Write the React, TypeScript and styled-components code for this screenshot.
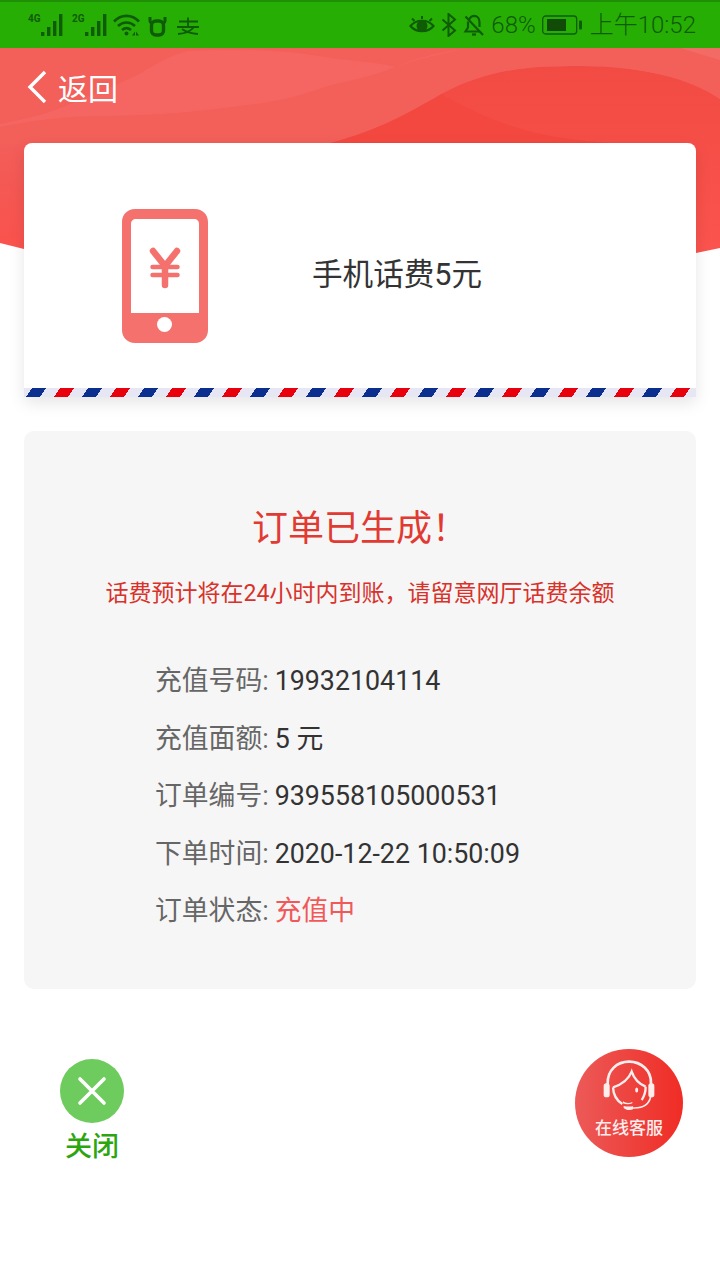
import styled, { createGlobalStyle } from "styled-components";

const GlobalStyle = createGlobalStyle`
  html, body {
    margin: 0;
    padding: 0;
    background: #fff;
  }
  body {
    font-family: Roboto, "Noto Sans CJK SC", sans-serif;
  }
  * {
    box-sizing: border-box;
  }
`;

const orderRows = [
  { label: "充值号码:", value: "19932104114" },
  { label: "充值面额:", value: "5 元" },
  { label: "订单编号:", value: "939558105000531" },
  { label: "下单时间:", value: "2020-12-22 10:50:09" },
  { label: "订单状态:", value: "充值中", pending: true },
];

const ink = "#0f5c07";
const agentWhite = "#fdeeee";

function SignalIcon({ tag }: { tag: string }) {
  return (
    <svg width="36" height="24" viewBox="0 0 36 24">
      <text x="0" y="9" fontSize="10" fontWeight="700" fill={ink} fontFamily="Roboto, sans-serif">
        {tag}
      </text>
      <g fill={ink}>
        <rect x="13" y="19" width="3.4" height="4" />
        <rect x="19" y="14" width="3.4" height="9" />
        <rect x="25" y="8" width="3.4" height="15" />
        <rect x="31" y="1" width="3.4" height="22" />
      </g>
    </svg>
  );
}

function WifiIcon() {
  return (
    <svg width="30" height="24" viewBox="0 0 30 24" fill="none" stroke={ink} strokeWidth="2.6">
      <path d="M1 8.5C8 1 19 1 26 8.500" />
      <path d="M5 13C10 8.300 17 8.300 22 13" />
      <path d="M9 17C12 14.500 15 14.500 18 17" />
      <circle cx="13.500" cy="20.500" r="2" fill={ink} stroke="none" />
      <path d="M19 22.500h3v-4zM23 18.500v4h3z" fill={ink} stroke="none" />
    </svg>
  );
}

function BullIcon() {
  return (
    <svg width="20" height="24" viewBox="0 0 20 24" fill="none" stroke={ink} strokeWidth="3.4">
      <path d="M2 4v4c0 1 1 2 2 2M17 4v4c0 1-1 2-2 2" strokeWidth="3" />
      <rect x="3.500" y="8" width="12" height="14" rx="4.500" />
    </svg>
  );
}

function PayIcon() {
  return (
    <svg width="28" height="24" viewBox="0 0 28 24" fill="none" stroke={ink} strokeWidth="1.800">
      <path d="M6 8.500h19M15 4.500v9.500M4 14h22" />
      <path d="M21 14c-3 4-9 6.500-16 7M9 16c4 3 10 4.500 16 5" />
    </svg>
  );
}

function EyeIcon() {
  return (
    <svg width="26" height="22" viewBox="0 0 26 22" fill="none" stroke={ink} strokeWidth="2.200">
      <path d="M1.500 12C7 5 19 5 24.500 12C19 19 7 19 1.500 12Z" />
      <circle cx="13" cy="12" r="4.400" fill={ink} />
      <path d="M3 4.500l2.500 2.500M13 2v3M23 4.500l-2.500 2.500" strokeWidth="2" />
    </svg>
  );
}

function BluetoothIcon() {
  return (
    <svg width="16" height="24" viewBox="0 0 16 24" fill="none" stroke={ink} strokeWidth="2">
      <path d="M1.500 6.500L14 17.500L7.500 23V1L14 6.500L1.500 17.500" />
    </svg>
  );
}

function MutedBellIcon() {
  return (
    <svg width="22" height="24" viewBox="0 0 22 24" fill="none" stroke={ink} strokeWidth="2.200">
      <path d="M6 7c.8-2.500 2.500-4 5-4.200 3.500 0 5.500 3 5.500 6.500V14" />
      <path d="M5 8.500V14.500L2.500 18.500H17" />
      <path d="M9 21.500h4" />
      <path d="M2.500 3.500L20 22" />
    </svg>
  );
}

function BatteryIcon() {
  return (
    <svg width="42" height="20" viewBox="0 0 42 20" fill="none">
      <rect x="0.700" y="1" width="34" height="18" rx="3" stroke={ink} strokeWidth="1.300" />
      <rect x="5" y="4" width="19" height="12" fill="#124a08" />
      <rect x="37" y="5.500" width="3" height="9" rx="1" fill={ink} />
    </svg>
  );
}

function PhoneYuanIcon() {
  return (
    <svg width="88" height="135" viewBox="0 0 88 135">
      <path
        fill="#f4716e"
        fillRule="evenodd"
        d="M14 0h60c7.500 0 13 5.500 13 13v108c0 7.500-5.500 13-13 13H14c-7.500 0-13-5.500-13-13V13C1 5.500 6.500 0 14 0ZM15 10c-3 0-5 2-5 5V104h68V15c0-3-2-5-5-5Z"
      />
      <circle cx="43.500" cy="115.500" r="7.500" fill="#fff" />
      <g fill="none" stroke="#f4716e" strokeLinecap="round" strokeLinejoin="round">
        <path d="M32 42L44 57L56 42" strokeWidth="6.500" />
        <path d="M31.500 58H56.500M31.500 66H56.500" strokeWidth="4.500" />
        <path d="M44 57V76" strokeWidth="6.500" />
      </g>
    </svg>
  );
}

// drawn on a 3x grid so the small curves stay easy to tweak
function AgentIcon() {
  return (
    <svg width="80" height="70" viewBox="0 0 240 210" fill="none" stroke={agentWhite} strokeWidth="8">
      <path d="M56 102C54 60 85 35 120 35C155 35 188 60 186 102" />
      <path d="M72 112C95 105 118 90 128 65C135 85 150 102 170 110" strokeWidth="7" />
      <path d="M72 112C73 135 84 152 100 162" strokeWidth="7" />
      <path d="M170 110C170 125 166 138 158 150" strokeWidth="7" />
      <path d="M185 140C180 165 160 175 132 174" strokeWidth="5" />
      <rect x="44" y="100" width="18" height="42" rx="8" fill={agentWhite} stroke="none" />
      <rect x="178" y="100" width="18" height="42" rx="8" fill={agentWhite} stroke="none" />
      <ellipse cx="143" cy="120" rx="4.500" ry="7.500" fill={agentWhite} stroke="none" />
      <path d="M102 154C110 160 122 160 130 156V160C122 164 110 164 102 160Z" fill={agentWhite} stroke="none" />
      <path d="M104 168C112 170 122 170 132 169V178C122 182 110 180 104 174Z" fill={agentWhite} stroke="none" />
    </svg>
  );
}

export default function App() {
  return (
    <Page>
      <GlobalStyle />
      <StatusBar>
        <StatusGroup>
          <SignalPair>
            <SignalIcon tag="4G" />
            <SignalIcon tag="2G" />
          </SignalPair>
          <WifiIcon />
          <BullIcon />
          <PayIcon />
        </StatusGroup>
        <ClockGroup>
          <EyeIcon />
          <BluetoothIcon />
          <MutedBellIcon />
          <StatusText>68%</StatusText>
          <BatteryIcon />
          <StatusText>上午10:52</StatusText>
        </ClockGroup>
      </StatusBar>

      <Content>
        <HeroWaves viewBox="0 0 720 215">
          <defs>
            <linearGradient id="heroBase" x1="0" y1="18" x2="0" y2="200" gradientUnits="userSpaceOnUse">
              <stop offset="0" stopColor="#f14b43" />
              <stop offset="1" stopColor="#fb534e" />
            </linearGradient>
            <linearGradient id="heroLeft" x1="0" y1="90" x2="0" y2="195" gradientUnits="userSpaceOnUse">
              <stop offset="0" stopColor="#f35f5b" />
              <stop offset="1" stopColor="#f35f5b" stopOpacity="0" />
            </linearGradient>
          </defs>
          <path d="M0 0H720V200L696 205C500 240 200 240 24 201L0 195Z" fill="url(#heroBase)" />
          <path d="M441 46L325 96H640C560 94 510 85 441 46Z" fill="#f3483f" />
          <path
            d="M0 0H720V51C690 30 640 18 581 18C530 18 490 20 441 46C400 70 370 85 325 96L0 200Z"
            fill="url(#heroLeft)"
          />
          <path d="M0 0H720V51C690 30 640 18 581 18C530 18 490 20 441 46C400 70 370 85 325 96H0Z" fill="#f35f59" />
          <path d="M465 1C440 6 415 12 395 19C370 30 350 32 325 39C290 52 260 56 232 59C180 66 140 68 93 68C50 70 25 74 0 79V76C30 70 50 65 70 56C95 45 115 38 139 26C155 16 170 8 186 3C240 0 290 2 325 9C345 13 375 13 395 19C415 10 440 4 465 1Z" fill="#f56562" />
          <path d="M680 0H720V12Z" fill="#f26c65" />
        </HeroWaves>

        <BackLink>
          <svg width="22" height="36" viewBox="0 0 22 36" fill="none" stroke="#fff" strokeWidth="3.400">
            <path d="M19 3L4 18L19 33" />
          </svg>
          <span>返回</span>
        </BackLink>

        <ProductCard>
          <ProductBody>
            <PhoneYuanIcon />
            <ProductTitle>手机话费5元</ProductTitle>
          </ProductBody>
          <AirmailStripe />
        </ProductCard>

        <OrderPanel>
          <OrderTitle>{"订单已生成\uFF01"}</OrderTitle>
          <OrderNote>{"话费预计将在24小时内到账\uFF0C请留意网厅话费余额"}</OrderNote>
          <OrderList>
            {orderRows.map((row) => (
              <OrderRow key={row.label}>
                <RowLabel>{row.label}</RowLabel>
                <RowValue $pending={row.pending}>{row.value}</RowValue>
              </OrderRow>
            ))}
          </OrderList>
        </OrderPanel>

        <Actions>
          <CloseAction>
            <CloseCircle>
              <svg width="30" height="30" viewBox="0 0 30 30" stroke="#fff" strokeWidth="3.600" strokeLinecap="round">
                <path d="M3 3L27 27M27 3L3 27" />
              </svg>
            </CloseCircle>
            <CloseLabel>关闭</CloseLabel>
          </CloseAction>
          <ServiceButton>
            <AgentIcon />
            <ServiceLabel>在线客服</ServiceLabel>
          </ServiceButton>
        </Actions>
      </Content>
    </Page>
  );
}

const Page = styled.div`
  width: 720px;
  height: 1280px;
  overflow: hidden;
  background: #fff;
`;

const StatusBar = styled.div`
  height: 48px;
  padding: 0 24px 0 28px;
  display: flex;
  align-items: center;
  justify-content: space-between;
  background: #27ae05;
  border-top: 2px solid #1f8f06;
`;

const StatusGroup = styled.div`
  display: flex;
  align-items: center;
  gap: 5px;
`;

const ClockGroup = styled(StatusGroup)`
  gap: 6px;
`;

const SignalPair = styled.div`
  display: flex;
  gap: 8px;
`;

const StatusText = styled.span`
  font-size: 24px;
  line-height: 28px;
  height: 28px;
  color: ${ink};
  font-weight: 300;
`;

const Content = styled.div`
  position: relative;
  padding: 0 24px;
`;

const HeroWaves = styled.svg`
  position: absolute;
  top: 0;
  left: 0;
  width: 720px;
  height: 215px;
`;

const BackLink = styled.div`
  position: relative;
  height: 95px;
  padding: 0 0 17px 2px;
  display: flex;
  align-items: center;
  gap: 10px;
  color: #fff;
  font-size: 30px;
`;

const ProductCard = styled.div`
  position: relative;
  height: 254px;
  display: flex;
  flex-direction: column;
  background: #fff;
  border-radius: 8px 8px 0 0;
  box-shadow: 0 6px 16px rgba(0, 0, 0, 0.1);
`;

const ProductBody = styled.div`
  flex: 1;
  display: flex;
  align-items: center;
  padding: 22px 0 0 97px;
  gap: 103px;
`;

const ProductTitle = styled.div`
  margin-bottom: 10px;
  font-size: 30.6px;
  color: #333;
`;

const AirmailStripe = styled.div`
  height: 9px;
  background-image: repeating-linear-gradient(
    123.7deg,
    #e6e6f5 0,
    #e6e6f5 6.6px,
    #0b2f8e 6.6px,
    #0b2f8e 18.2px,
    #e6e6f5 18.2px,
    #e6e6f5 29.9px,
    #e8000d 29.9px,
    #e8000d 41.5px,
    #e6e6f5 41.5px,
    #e6e6f5 46.6px
  );
`;

const OrderPanel = styled.div`
  height: 558px;
  margin-top: 34px;
  padding-top: 73px;
  background: #f6f6f6;
  border-radius: 10px;
`;

const OrderTitle = styled.div`
  text-align: center;
  font-size: 36px;
  line-height: 50px;
  color: #e13a32;
`;

const OrderNote = styled.div`
  margin-top: 24px;
  text-align: center;
  font-size: 23px;
  line-height: 32px;
  color: #d8322b;
`;

const OrderList = styled.div`
  margin-top: 43px;
  padding-left: 131px;
  display: flex;
  flex-direction: column;
`;

const OrderRow = styled.div`
  height: 57.5px;
  display: flex;
  align-items: baseline;
  gap: 6px;
  font-size: 26.8px;
  line-height: 57.5px;
`;

const RowLabel = styled.span`
  color: #666;
`;

const RowValue = styled.span<{ $pending?: boolean }>`
  color: ${(p) => (p.$pending ? "#f0595a" : "#333")};
`;

const Actions = styled.div`
  margin-top: 60px;
  padding: 0 13px 0 23px;
  display: flex;
  align-items: flex-start;
  justify-content: space-between;
`;

const CloseAction = styled.div`
  margin-top: 10px;
  width: 90px;
  display: flex;
  flex-direction: column;
  align-items: center;
  gap: 4px;
`;

const CloseCircle = styled.div`
  width: 64px;
  height: 64px;
  display: flex;
  align-items: center;
  justify-content: center;
  border-radius: 50%;
  background: #6ecb5d;
`;

const CloseLabel = styled.div`
  font-size: 27px;
  line-height: 40px;
  font-weight: 500;
  color: #2ca50f;
`;

const ServiceButton = styled.div`
  width: 108px;
  height: 108px;
  padding-top: 1px;
  display: flex;
  flex-direction: column;
  align-items: center;
  border-radius: 50%;
  background: linear-gradient(90deg, #ec5a58, #f02c25);
`;

const ServiceLabel = styled.div`
  margin-top: -4px;
  font-size: 17px;
  line-height: 24px;
  font-weight: 500;
  color: ${agentWhite};
`;
